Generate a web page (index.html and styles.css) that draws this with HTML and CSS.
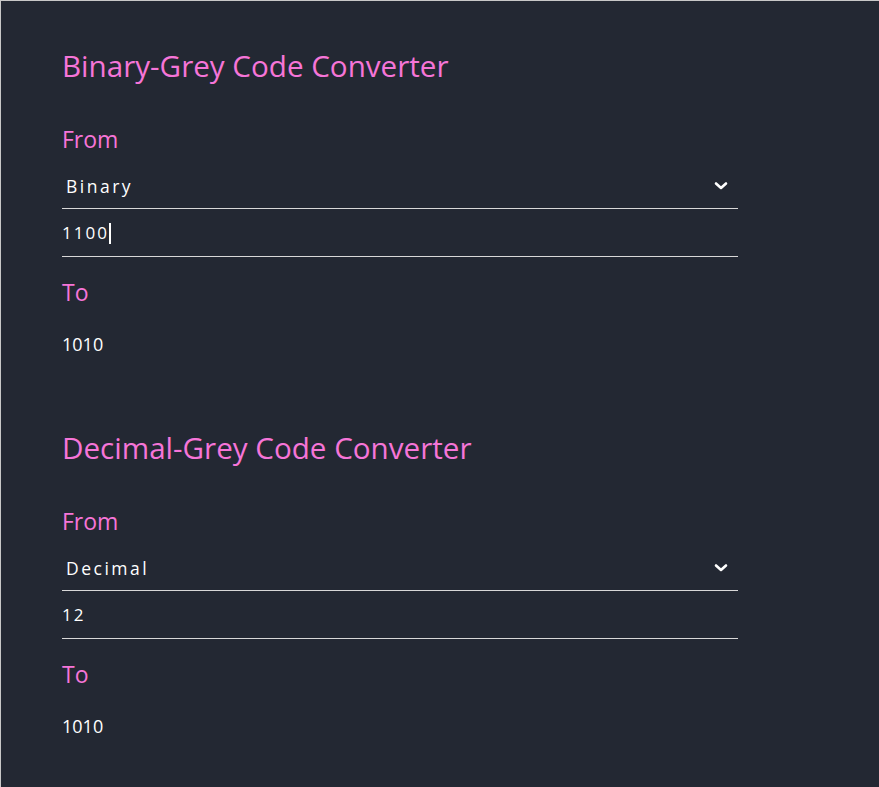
FILE: index.html
```html
<!DOCTYPE html>
<html>
<head>
<meta charset="utf-8">
<link rel="stylesheet" href="styles.css">
</head>
<body>
<div class="page">
  <section class="converter">
    <h2 class="title">Binary-Grey Code Converter</h2>
    <div class="label">From</div>
    <div class="select">
      <span class="select-text">Binary</span>
      <svg class="chevron" width="14" height="10" viewBox="0 0 14 10"><path d="M2 2.5 L7 7 L12 2.5" fill="none" stroke="#ffffff" stroke-width="2.6" stroke-linecap="round" stroke-linejoin="round"/></svg>
    </div>
    <div class="input"><span class="input-text">1100</span><span class="caret"></span></div>
    <div class="label to">To</div>
    <div class="output">1010</div>
  </section>
  <section class="converter">
    <h2 class="title">Decimal-Grey Code Converter</h2>
    <div class="label">From</div>
    <div class="select">
      <span class="select-text">Decimal</span>
      <svg class="chevron" width="14" height="10" viewBox="0 0 14 10"><path d="M2 2.5 L7 7 L12 2.5" fill="none" stroke="#ffffff" stroke-width="2.6" stroke-linecap="round" stroke-linejoin="round"/></svg>
    </div>
    <div class="input"><span class="input-text">12</span></div>
    <div class="label to">To</div>
    <div class="output">1010</div>
  </section>
</div>
</body>
</html>
```
FILE: styles.css
```css
html, body {
  margin: 0;
  padding: 0;
}
body {
  background: #232833;
  width: 879px;
  height: 787px;
  overflow: hidden;
  box-sizing: border-box;
  border-top: 1px solid #c8c8c8;
  border-left: 1px solid #c8c8c8;
  font-family: "Open Sans", "Noto Sans", sans-serif;
  color: #ffffff;
}
.page {
  padding-top: 47px;
  padding-left: 61px;
}
.converter {
  width: 676px;
  height: 382px;
}
.title {
  margin: 0;
  font-weight: 400;
  font-size: 29.6px;
  line-height: 36px;
  color: #f675d8;
  letter-spacing: 0;
}
.label {
  margin-top: 40px;
  font-size: 23px;
  line-height: 30px;
  color: #f675d8;
}
.label.to {
  margin-top: 20px;
}
.select {
  display: flex;
  align-items: center;
  justify-content: space-between;
  padding: 20px 10px 10px 4px;
  height: 24px;
  border-bottom: 1px solid #d8d8d8;
}
.select-text {
  font-size: 17.5px;
  line-height: 24px;
  letter-spacing: 2.5px;
  font-weight: 500;
}
.chevron {
  display: block;
}
.input {
  display: flex;
  align-items: center;
  padding: 12px 0 11px 0;
  height: 24px;
  border-bottom: 1px solid #d8d8d8;
}
.input-text {
  font-size: 17px;
  line-height: 24px;
  letter-spacing: 2px;
  font-weight: 500;
}
.caret {
  display: inline-block;
  width: 2px;
  height: 21px;
  background: #ffffff;
  margin-left: 0;
}
.output {
  margin-top: 25px;
  font-size: 18px;
  line-height: 24px;
  letter-spacing: 0;
  font-weight: 500;
}
```
